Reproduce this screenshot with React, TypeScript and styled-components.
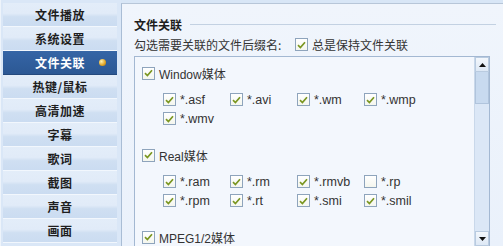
import React from "react";
import styled, { createGlobalStyle } from "styled-components";

const GlobalStyle = createGlobalStyle`
  html, body {
    margin: 0;
    padding: 0;
    background: #dce9f8;
  }
  * {
    box-sizing: border-box;
  }
`;

const CJK = `"Noto Sans CJK SC", "Liberation Sans", sans-serif`;
const LATIN = `"Liberation Sans", "Noto Sans CJK SC", sans-serif`;

const Window = styled.div`
  display: flex;
  width: 503px;
  height: 246px;
  overflow: hidden;
  background: #d8e6f6;
  font-family: ${CJK};
  font-size: 12px;
  color: #222;
`;

const Sidebar = styled.div`
  display: flex;
  flex-direction: column;
  width: 121px;
  padding: 3px 4px 0 2px;
  background: #dae7f7;
  border-left: 1px solid #eef4fb;
`;

const SideItem = styled.div<{ $active?: boolean }>`
  position: relative;
  height: 24px;
  flex-shrink: 0;
  display: flex;
  align-items: center;
  justify-content: center;
  font-weight: 700;
  font-size: 12px;
  letter-spacing: 0.5px;
  color: ${(p) => (p.$active ? "#ffffff" : "#1e1e1e")};
  border-bottom: 1px solid ${(p) => (p.$active ? "#24497d" : "#f2f7fd")};
  background: ${(p) =>
    p.$active
      ? "linear-gradient(#3565a6, #2c5894)"
      : "linear-gradient(#e3edf9 0%, #e1ebf8 45%, #cfdff2 60%, #cbdcf1 100%)"};
`;

const ActiveDot = styled.span`
  position: absolute;
  right: 11px;
  top: 8px;
  width: 7px;
  height: 7px;
  border-radius: 50%;
  background: radial-gradient(circle at 35% 35%, #fff2b0, #e0a220 60%, #a8701a);
`;

const Main = styled.div`
  flex: 1;
  display: flex;
  flex-direction: column;
  margin-top: 3px;
  padding: 12px 13px 0 12px;
  border-left: 1px solid #a9bdd5;
  border-top: 1px solid #b7c6d8;
  background: linear-gradient(#f0f5fc, #eaf1fb);
`;

const SectionHeader = styled.div`
  display: flex;
  align-items: center;
  gap: 8px;
  height: 18px;
`;

const SectionTitle = styled.span`
  font-weight: 700;
  font-size: 12px;
  color: #1e1e1e;
`;

const Rule = styled.div`
  flex: 1;
  height: 1px;
  margin-right: -6px;
  background: #c3d1e2;
`;

const PromptRow = styled.div`
  display: flex;
  align-items: center;
  height: 20px;
  margin-top: 3px;
  color: #333;
`;

const PromptText = styled.span`
  width: 161px;
`;

const ListBox = styled.div`
  display: flex;
  height: 191px;
  margin-top: 3px;
  border: 1px solid #a3b8d2;
  background: #f3f7fd;
`;

const ListContent = styled.div`
  flex: 1;
  padding: 7px 0 0 7px;
`;

const Group = styled.div`
  margin-bottom: 18px;
`;

const GroupHeader = styled.label`
  display: flex;
  align-items: center;
  gap: 4px;
  height: 18px;
  font-family: ${LATIN};
  font-size: 12px;
  color: #333;
`;

const ItemsGrid = styled.div`
  display: grid;
  grid-template-columns: repeat(4, 67px);
  grid-auto-rows: 19px;
  margin-top: 8px;
  padding-left: 21px;
`;

const Item = styled.label`
  display: flex;
  align-items: center;
  gap: 4px;
  font-family: ${LATIN};
  font-size: 12.5px;
  color: #333;
`;

const Box = styled.span`
  display: inline-flex;
  align-items: center;
  justify-content: center;
  width: 13px;
  height: 13px;
  flex-shrink: 0;
  border: 1px solid #8ea4bc;
  background: linear-gradient(#ffffff, #f4f6ee);
`;

const Scrollbar = styled.div`
  display: flex;
  flex-direction: column;
  width: 15px;
  background: #dbe7f6;
  border-left: 1px solid #c9d8ea;
`;

const ScrollButton = styled.div`
  height: 15px;
  display: flex;
  align-items: center;
  justify-content: center;
  background: linear-gradient(#f3f7fc, #dde8f5);
  border: 1px solid #b9cbe0;
`;

const Thumb = styled.div`
  height: 32px;
  background: #c8daef;
  border: 1px solid #b0c4dc;
  border-top: none;
`;

const Track = styled.div`
  flex: 1;
`;

const Check = ({ on = true }: { on?: boolean }) => (
  <Box>
    {on && (
      <svg width="9" height="8" viewBox="0 0 9 8">
        <path d="M1 4.2 L3.4 6.5 L8 1.2" fill="none" stroke="#7a9620" strokeWidth="1.7" />
      </svg>
    )}
  </Box>
);

const Arrow = ({ up }: { up?: boolean }) => (
  <svg width="7" height="4" viewBox="0 0 7 4">
    <path d={up ? "M0 4 L3.5 0 L7 4 Z" : "M0 0 L3.5 4 L7 0 Z"} fill="#111" />
  </svg>
);

const menu = ["文件播放", "系统设置", "文件关联", "热键/鼠标", "高清加速", "字幕", "歌词", "截图", "声音", "画面"];

const groups: { name: string; items: [string, boolean][] }[] = [
  {
    name: "Window媒体",
    items: [
      ["*.asf", true],
      ["*.avi", true],
      ["*.wm", true],
      ["*.wmp", true],
      ["*.wmv", true],
    ],
  },
  {
    name: "Real媒体",
    items: [
      ["*.ram", true],
      ["*.rm", true],
      ["*.rmvb", true],
      ["*.rp", false],
      ["*.rpm", true],
      ["*.rt", true],
      ["*.smi", true],
      ["*.smil", true],
    ],
  },
  { name: "MPEG1/2媒体", items: [] },
];

const App = () => {
  return (
    <>
      <GlobalStyle />
      <Window>
        <Sidebar>
          {menu.map((m) => (
            <SideItem key={m} $active={m === "文件关联"}>
              {m}
              {m === "文件关联" && <ActiveDot />}
            </SideItem>
          ))}
        </Sidebar>
        <Main>
          <SectionHeader>
            <SectionTitle>文件关联</SectionTitle>
            <Rule />
          </SectionHeader>
          <PromptRow>
            <PromptText>勾选需要关联的文件后缀名:</PromptText>
            <Item>
              <Check />
              <span style={{ fontFamily: CJK, fontSize: 12 }}>总是保持文件关联</span>
            </Item>
          </PromptRow>
          <ListBox>
            <ListContent>
              {groups.map((g) => (
                <Group key={g.name}>
                  <GroupHeader>
                    <Check />
                    {g.name}
                  </GroupHeader>
                  {g.items.length > 0 && (
                    <ItemsGrid>
                      {g.items.map(([ext, on]) => (
                        <Item key={ext}>
                          <Check on={on} />
                          {ext}
                        </Item>
                      ))}
                    </ItemsGrid>
                  )}
                </Group>
              ))}
            </ListContent>
            <Scrollbar>
              <ScrollButton>
                <Arrow up />
              </ScrollButton>
              <Thumb />
              <Track />
              <ScrollButton>
                <Arrow />
              </ScrollButton>
            </Scrollbar>
          </ListBox>
        </Main>
      </Window>
    </>
  );
};

export default App;
